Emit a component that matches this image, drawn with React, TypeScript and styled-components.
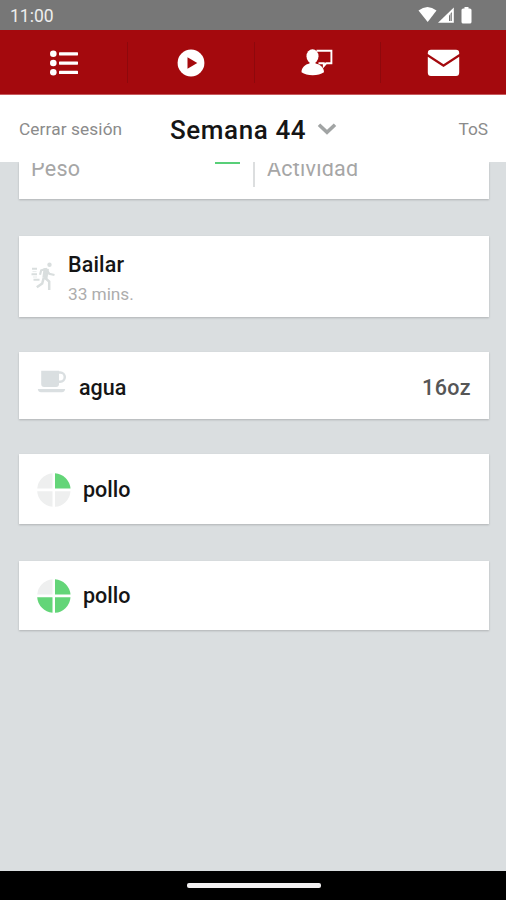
import React from "react";
import styled, { createGlobalStyle } from "styled-components";

const GlobalStyle = createGlobalStyle`
  * { box-sizing: border-box; }
  body { margin: 0; font-family: Roboto, "Liberation Sans", sans-serif; }
  svg { display: block; flex: none; }
`;

const Screen = styled.div`
  width: 506px;
  height: 900px;
  display: flex;
  flex-direction: column;
  overflow: hidden;
  background: #dadee0;
`;

const StatusBar = styled.div`
  height: 30px;
  flex: none;
  display: flex;
  justify-content: space-between;
  padding: 0 32px 0 10px;
  background: #777777;
`;

const TabBar = styled.nav`
  height: 65px;
  flex: none;
  display: grid;
  grid-template-columns: 127px 127px 126px 126px;
  background: #a4090d;
  border-bottom: 1px solid #c75a5d;
`;

const Tab = styled.div<{ $divider?: boolean }>`
  display: flex;
  align-items: center;
  justify-content: center;
  padding-top: 1px;
  background: ${(p) =>
    p.$divider ? "linear-gradient(#8e080c, #8e080c) left 12px / 1px 41px no-repeat" : "none"};
`;

const Header = styled.header`
  height: 67px;
  flex: none;
  display: grid;
  grid-template-columns: 151px 1fr 100px;
  padding: 0 18px 0 19px;
  background: #fff;
`;

const WeekPicker = styled.div`
  display: flex;
`;

const Label = styled.span<{
  $size: number;
  $line: number;
  $color: string;
  $weight?: number;
  $spacing?: number;
}>`
  display: block;
  white-space: nowrap;
  font-size: ${(p) => p.$size}px;
  line-height: ${(p) => p.$line}px;
  color: ${(p) => p.$color};
  font-weight: ${(p) => p.$weight ?? 400};
  letter-spacing: ${(p) => p.$spacing ?? 0}px;
`;

const EndLabel = styled(Label)`
  text-align: right;
`;

const Feed = styled.main`
  flex: 1;
  min-height: 0;
  padding: 0 17px 0 19px;
`;

const Card = styled.section<{ $height: number; $gap: number }>`
  height: ${(p) => p.$height}px;
  margin-bottom: ${(p) => p.$gap}px;
  display: flex;
  background: #fff;
  box-shadow: 0 1px 2px rgba(0, 0, 0, 0.2);
`;

const SummaryCard = styled(Card)`
  clip-path: inset(0 -4px -4px -4px);
`;

const SummaryCell = styled.div`
  width: 234px;
  padding-left: 12px;
  display: flex;
  justify-content: space-between;
`;

const ClippedLabel = styled(Label)`
  margin-top: -8px;
  clip-path: inset(9px 0 0 0);
`;

const GreenDash = styled.div`
  width: 25px;
  height: 2px;
  margin-right: 13px;
  background: #58cf78;
`;

const CellRule = styled.div`
  width: 2px;
  height: 25px;
  background: #dcdedf;
`;

const IconSlot = styled.div<{ $width: number; $left: number; $top: number }>`
  width: ${(p) => p.$width}px;
  flex: none;
  padding: ${(p) => p.$top}px 0 0 ${(p) => p.$left}px;
`;

const Body = styled.div`
  flex: 1;
`;

const Trailing = styled.div`
  padding-right: 18px;
`;

const SystemNav = styled.footer`
  height: 29px;
  flex: none;
  display: flex;
  justify-content: center;
  padding: 12px 0 0 1px;
  background: #000;
`;

const HomeHandle = styled.div`
  width: 134px;
  height: 5px;
  border-radius: 2px;
  background: #f2f0f1;
`;

const SystemIcons = () => (
  <svg width="56" height="30" viewBox="0 0 56 30">
    <path d="M0.5 10.5Q9.5 3.5 18.5 10.5L9.7 22Z" fill="#fff" />
    <path d="M20 22.8 35.8 7.5V22.8Z" fill="#fff" />
    <path d="M31 15.4 34 12V21H31Z" fill="#777" />
    <path d="M32.8 13.5V21" stroke="#d0d0d0" strokeWidth="1" />
    <path d="M46.5 7H50.5V8.5H51.8Q53.5 8.5 53.5 10V22Q53.5 23.5 51.8 23.5H45.2Q43.5 23.5 43.5 22V10Q43.5 8.5 45.2 8.5H46.5Z" fill="#fff" />
  </svg>
);

const ListIcon = () => (
  <svg width="28" height="26" viewBox="0 0 28 26" fill="#fff">
    {[3.7, 13, 22.3].map((y) => (
      <React.Fragment key={y}>
        <circle cx="3.3" cy={y} r="3.3" />
        <rect x="9" y={y - 1.5} width="19" height="3.2" rx=".6" />
      </React.Fragment>
    ))}
  </svg>
);

const PlayIcon = () => (
  <svg width="28" height="28" viewBox="0 0 28 28">
    <circle cx="14" cy="14" r="13.4" fill="#fff" />
    <path d="M10.5 8.2V19.8L20.3 14Z" fill="#a4090d" />
  </svg>
);

const CoachIcon = () => (
  <svg width="32" height="27" viewBox="0 0 32 27">
    <path d="M15.5 1.7H30.4V14.3H25.2L22.8 17V14.3H17.5" fill="none" stroke="#fff" strokeWidth="1.9" />
    <ellipse cx="11.5" cy="7.3" rx="6" ry="7" fill="#fff" />
    <path d="M.5 23.3C.5 18.5 4 15.5 8.5 14.5V12H14.5V14.5C19.5 15.5 23 18.5 23 23.3Q18.5 26.3 11.7 26.3T.5 23.3Z" fill="#fff" />
  </svg>
);

const MailIcon = () => (
  <svg width="33" height="28" viewBox="0 0 33 28" fill="#fff">
    <path d="M4 .8H29Q32.2 .8 32.2 4V5L16.5 15.3.8 5V4Q.8 .8 4 .8Z" />
    <path d="M.8 7.8 16.5 18.1 32.2 7.8V23.5Q32.2 27 29 27H4Q.8 27 .8 23.5Z" />
  </svg>
);

const ChevronIcon = () => (
  <svg width="20" height="14" viewBox="0 0 20 14">
    <path d="M2 2.7 10 10.3 18 2.7" fill="none" stroke="#a1a4a4" strokeWidth="3.6" />
  </svg>
);

const RunnerIcon = () => (
  <svg width="25" height="29" viewBox="0 0 25 29" fill="none" stroke="#d9dede" strokeWidth="2">
    <circle cx="18.5" cy="2.8" r="2.2" fill="#d9dede" stroke="none" />
    <path d="M13.5 7.2 16.8 7.8 15.6 15.5 12.5 14.5Z" fill="#d9dede" />
    <path d="M9 12.7 10.2 8.3 15 7.1 18.2 11.7 23.5 13" strokeWidth="2.2" />
    <path d="M13 15 18.2 19.5V28M12.8 15.5 11.2 21.5 5.8 25.3" strokeWidth="2.5" />
    <path d="M1 6.8H6M.5 12.3H6M2.5 17.8H8.5" strokeWidth="1.9" />
    <path d="M1.5 9.6H5.5M2 15H6" strokeWidth="1" opacity=".6" />
  </svg>
);

const CupIcon = () => (
  <svg width="30" height="24" viewBox="0 0 30 24">
    <path d="M22 2.5H23.2A4.5 4.5 0 0 1 23.2 11.7H21" fill="none" stroke="#dadfe1" strokeWidth="2.5" />
    <path d="M4.2 .8H22V14Q22 17 19 17H7.2Q4.2 17 4.2 14Z" fill="#dadfe1" />
    <path d="M.8 19H28.2Q27.5 22.2 25 22.2H4Q1.3 22.2 .8 19Z" fill="#dadfe1" />
  </svg>
);

const GREEN = "#63d578";
const GREY = "#eeefef";

const PortionIcon = ({ filled }: { filled: 1 | 3 }) => (
  <svg width="34" height="34" viewBox="0 0 34 34">
    <path d="M15.5 15.5H.2A16.8 16.8 0 0 1 15.5 .2Z" fill={GREY} />
    <path d="M18 15.5V.2A16.8 16.8 0 0 1 33.5 15.5Z" fill={GREEN} />
    <path d="M18 18.2H33.5A16.8 16.8 0 0 1 18 33.8Z" fill={filled === 3 ? GREEN : GREY} />
    <path d="M15.5 18.2V33.8A16.8 16.8 0 0 1 .2 18.2Z" fill={filled === 3 ? GREEN : GREY} />
  </svg>
);

export default function App() {
  return (
    <>
      <GlobalStyle />
      <Screen>
        <StatusBar>
          <Label $size={17.5} $line={33} $color="#ededed">11:00</Label>
          <SystemIcons />
        </StatusBar>
        <TabBar>
          <Tab><ListIcon /></Tab>
          <Tab $divider><PlayIcon /></Tab>
          <Tab $divider><CoachIcon /></Tab>
          <Tab $divider><MailIcon /></Tab>
        </TabBar>
        <Header>
          <Label $size={17.3} $line={69} $color="#8b8b8b" $spacing={0.1}>Cerrar sesión</Label>
          <WeekPicker>
            <Label $size={26} $line={70} $color="#151515" $weight={500} $spacing={0.6}>Semana 44</Label>
            <IconSlot $width={32} $left={11} $top={27}><ChevronIcon /></IconSlot>
          </WeekPicker>
          <EndLabel $size={17.3} $line={69} $color="#8b8b8b">ToS</EndLabel>
        </Header>
        <Feed>
          <SummaryCard $height={37} $gap={37}>
            <SummaryCell>
              <ClippedLabel $size={21.5} $line={29} $color="#a6a6a6" $spacing={0.3}>Peso</ClippedLabel>
              <GreenDash />
            </SummaryCell>
            <CellRule />
            <SummaryCell>
              <ClippedLabel $size={21.5} $line={29} $color="#a6a6a6" $spacing={0.25}>Actividad</ClippedLabel>
            </SummaryCell>
          </SummaryCard>
          <Card $height={81} $gap={35}>
            <IconSlot $width={49} $left={12} $top={26}><RunnerIcon /></IconSlot>
            <Body>
              <Label $size={21.5} $line={58} $color="#151515" $weight={500} $spacing={0.15}>Bailar</Label>
              <Label $size={17.3} $line={1} $color="#adadad" $spacing={-0.05}>33 mins.</Label>
            </Body>
          </Card>
          <Card $height={67} $gap={35}>
            <IconSlot $width={60} $left={18} $top={18}><CupIcon /></IconSlot>
            <Body><Label $size={21.5} $line={72} $color="#151515" $weight={500}>agua</Label></Body>
            <Trailing><Label $size={21.5} $line={72} $color="#565656" $weight={500} $spacing={0.4}>16oz</Label></Trailing>
          </Card>
          <Card $height={70} $gap={37}>
            <IconSlot $width={64} $left={18} $top={18.5}><PortionIcon filled={1} /></IconSlot>
            <Body><Label $size={21.5} $line={72} $color="#151515" $weight={500}>pollo</Label></Body>
          </Card>
          <Card $height={69} $gap={0}>
            <IconSlot $width={64} $left={18} $top={17.7}><PortionIcon filled={3} /></IconSlot>
            <Body><Label $size={21.5} $line={70} $color="#151515" $weight={500}>pollo</Label></Body>
          </Card>
        </Feed>
        <SystemNav><HomeHandle /></SystemNav>
      </Screen>
    </>
  );
}
